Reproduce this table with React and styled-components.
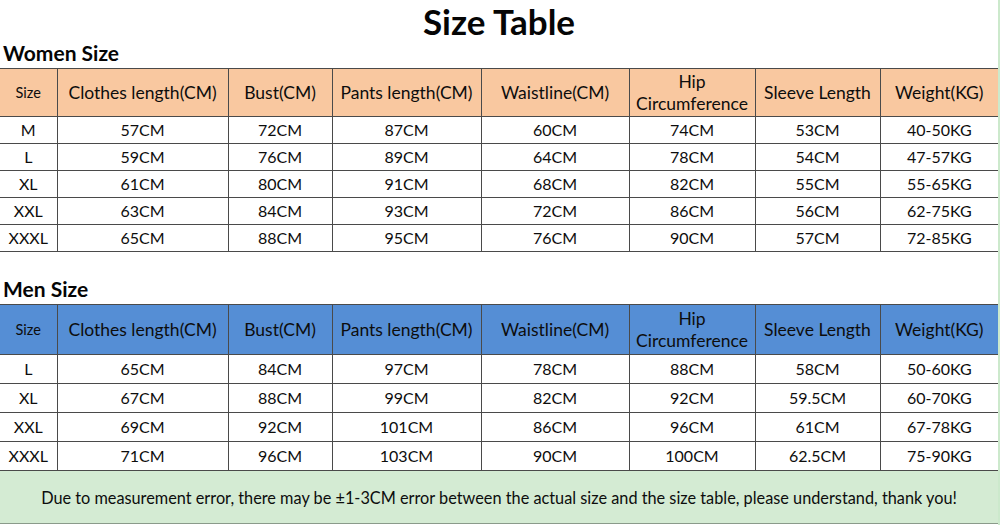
import React from 'react';
import styled, { createGlobalStyle } from 'styled-components';

const GlobalStyle = createGlobalStyle`
  html, body {
    margin: 0;
    padding: 0;
    background: #fff;
  }
  body {
    font-family: Lato, 'Open Sans', 'Liberation Sans', sans-serif;
    color: #0d0d0d;
  }
`;

const columns = [57, 171, 104, 149, 148, 126, 125, 118];

const headers = [
  'Size',
  'Clothes length(CM)',
  'Bust(CM)',
  'Pants length(CM)',
  'Waistline(CM)',
  ['Hip', 'Circumference'],
  'Sleeve Length',
  'Weight(KG)',
];

const women = [
  ['M', '57CM', '72CM', '87CM', '60CM', '74CM', '53CM', '40-50KG'],
  ['L', '59CM', '76CM', '89CM', '64CM', '78CM', '54CM', '47-57KG'],
  ['XL', '61CM', '80CM', '91CM', '68CM', '82CM', '55CM', '55-65KG'],
  ['XXL', '63CM', '84CM', '93CM', '72CM', '86CM', '56CM', '62-75KG'],
  ['XXXL', '65CM', '88CM', '95CM', '76CM', '90CM', '57CM', '72-85KG'],
];

const men = [
  ['L', '65CM', '84CM', '97CM', '78CM', '88CM', '58CM', '50-60KG'],
  ['XL', '67CM', '88CM', '99CM', '82CM', '92CM', '59.5CM', '60-70KG'],
  ['XXL', '69CM', '92CM', '101CM', '86CM', '96CM', '61CM', '67-78KG'],
  ['XXXL', '71CM', '96CM', '103CM', '90CM', '100CM', '62.5CM', '75-90KG'],
];

const SizeGrid = ({ tone, headHeight, rowHeight, rows }) => (
  <Grid>
    <colgroup>
      {columns.map((w, i) => (
        <col key={i} style={{ width: w }} />
      ))}
    </colgroup>
    <thead>
      <HeadRow $tone={tone} $h={headHeight}>
        {headers.map((h, i) => (
          <HeadCell key={i} $small={i === 0}>
            {Array.isArray(h) ? (
              <>
                {h[0]}
                <br />
                {h[1]}
              </>
            ) : (
              h
            )}
          </HeadCell>
        ))}
      </HeadRow>
    </thead>
    <tbody>
      {rows.map((r) => (
        <BodyRow key={r[0]} $h={rowHeight}>
          {r.map((c, i) => (
            <Cell key={i}>{c}</Cell>
          ))}
        </BodyRow>
      ))}
    </tbody>
  </Grid>
);

const App = () => {
  return (
    <Page>
      <GlobalStyle />
      <Title>Size Table</Title>
      <Section>Women Size</Section>
      <SizeGrid tone="#f9c8a0" headHeight={48} rowHeight={27} rows={women} />
      <Section $top={26}>Men Size</Section>
      <SizeGrid tone="#558ed5" headHeight={50} rowHeight={29} rows={men} />
      <Notice>
        Due to measurement error, there may be ±1-3CM error between the actual size and the size table, please understand, thank you!
      </Notice>
    </Page>
  );
};

export default App;

const Page = styled.div`
  width: 1000px;
  height: 525px;
  box-sizing: border-box;
  border-right: 2px solid #cce9cc;
  display: flex;
  flex-direction: column;
  overflow: hidden;
`;

const Title = styled.h1`
  margin: 0;
  flex-shrink: 0;
  line-height: 42px;
  font-size: 35px;
  font-weight: 700;
  text-align: center;
  color: #050505;
`;

const Section = styled.h2`
  margin: 0;
  flex-shrink: 0;
  padding: ${(p) => p.$top || 0}px 0 4px 3px;
  line-height: 22px;
  font-size: 21px;
  font-weight: 700;
  color: #050505;
`;

const Grid = styled.table`
  width: 998px;
  flex-shrink: 0;
  table-layout: fixed;
  border-collapse: collapse;
  font-size: 16px;
`;

const HeadRow = styled.tr`
  height: ${(p) => p.$h}px;
  background: ${(p) => p.$tone};
`;

const HeadCell = styled.th`
  padding: 0;
  font-weight: 400;
  font-size: ${(p) => (p.$small ? '14.5px' : '17.5px')};
  line-height: 22px;
  text-align: center;
  border: 1px solid #4a4a4a;
  &:first-child {
    border-left: none;
  }
  &:last-child {
    border-right: none;
  }
`;

const BodyRow = styled.tr`
  height: ${(p) => p.$h}px;
`;

const Cell = styled.td`
  padding: 0 0 2px;
  text-align: center;
  border: 1px solid #4a4a4a;
  &:first-child {
    border-left: none;
  }
  &:last-child {
    border-right: none;
  }
`;

const Notice = styled.div`
  height: 53px;
  flex-shrink: 0;
  box-sizing: border-box;
  background: #d4ebd3;
  border-bottom: 1px solid #8a9a8a;
  display: flex;
  align-items: center;
  justify-content: center;
  font-size: 16.3px;
  color: #0d0d0d;
`;
